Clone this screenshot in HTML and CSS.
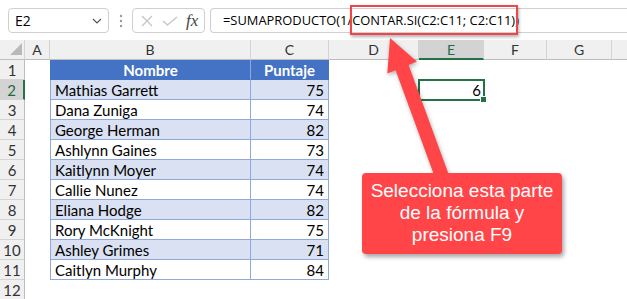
FILE: index.html
```html
<!DOCTYPE html>
<html lang="es">
<head>
    <meta charset="UTF-8">
    <meta name="viewport" content="width=device-width, initial-scale=1.0">
    <title>SUMAPRODUCTO y CONTAR.SI</title>
    <link rel="stylesheet" href="styles.css">
</head>
<body>
    <div class="toolbar">
        <div class="name-box">
            <span>E2</span>
            <svg class="chevron" width="10" height="6" viewBox="0 0 10 6"><path d="M1 1 L5 5 L9 1" fill="none" stroke="#555" stroke-width="1.2"/></svg>
        </div>
        <svg class="grip" width="4" height="14" viewBox="0 0 4 14">
            <circle cx="2" cy="2" r="1.2" fill="#999"/>
            <circle cx="2" cy="7" r="1.2" fill="#999"/>
            <circle cx="2" cy="12" r="1.2" fill="#999"/>
        </svg>
        <div class="fx-box">
            <svg width="12" height="12" viewBox="0 0 12 12"><path d="M1 1 L11 11 M11 1 L1 11" stroke="#c4c4c4" stroke-width="1.3"/></svg>
            <svg width="16" height="10" viewBox="0 0 16 10"><path d="M1 5 L5.5 9 L15 1" fill="none" stroke="#c4c4c4" stroke-width="1.3"/></svg>
            <span class="fx">fx</span>
        </div>
        <div class="formula">
            =SUMAPRODUCTO(1/<span class="mark">CONTAR.SI(C2:C11; C2:C11)</span>)
        </div>
    </div>

    <div class="sheet">
        <div class="ch corner"></div>
        <div class="ch">A</div>
        <div class="ch">B</div>
        <div class="ch">C</div>
        <div class="ch">D</div>
        <div class="ch active">E</div>
        <div class="ch">F</div>
        <div class="ch">G</div>
        <div class="ch last"></div>

        <div class="rh">1</div><div class="c"></div>
        <div class="t head name">Nombre</div><div class="t head score">Puntaje</div>
        <div class="c"></div><div class="c"></div><div class="c"></div><div class="c"></div><div class="c"></div>

        <div class="rh active">2</div><div class="c"></div>
        <div class="t band name">Mathias Garrett</div><div class="t band score">75</div>
        <div class="c"></div><div class="c selected">6</div><div class="c"></div><div class="c"></div><div class="c"></div>

        <div class="rh">3</div><div class="c"></div>
        <div class="t name">Dana Zuniga</div><div class="t score">74</div>
        <div class="c"></div><div class="c"></div><div class="c"></div><div class="c"></div><div class="c"></div>

        <div class="rh">4</div><div class="c"></div>
        <div class="t band name">George Herman</div><div class="t band score">82</div>
        <div class="c"></div><div class="c"></div><div class="c"></div><div class="c"></div><div class="c"></div>

        <div class="rh">5</div><div class="c"></div>
        <div class="t name">Ashlynn Gaines</div><div class="t score">73</div>
        <div class="c"></div><div class="c"></div><div class="c"></div><div class="c"></div><div class="c"></div>

        <div class="rh">6</div><div class="c"></div>
        <div class="t band name">Kaitlynn Moyer</div><div class="t band score">74</div>
        <div class="c"></div><div class="c"></div><div class="c"></div><div class="c"></div><div class="c"></div>

        <div class="rh">7</div><div class="c"></div>
        <div class="t name">Callie Nunez</div><div class="t score">74</div>
        <div class="c"></div><div class="c"></div><div class="c"></div><div class="c"></div><div class="c"></div>

        <div class="rh">8</div><div class="c"></div>
        <div class="t band name">Eliana Hodge</div><div class="t band score">82</div>
        <div class="c"></div><div class="c"></div><div class="c"></div><div class="c"></div><div class="c"></div>

        <div class="rh">9</div><div class="c"></div>
        <div class="t name">Rory McKnight</div><div class="t score">75</div>
        <div class="c"></div><div class="c"></div><div class="c"></div><div class="c"></div><div class="c"></div>

        <div class="rh">10</div><div class="c"></div>
        <div class="t band name">Ashley Grimes</div><div class="t band score">71</div>
        <div class="c"></div><div class="c"></div><div class="c"></div><div class="c"></div><div class="c"></div>

        <div class="rh">11</div><div class="c"></div>
        <div class="t name">Caitlyn Murphy</div><div class="t score">84</div>
        <div class="c"></div><div class="c"></div><div class="c"></div><div class="c"></div><div class="c"></div>

        <div class="rh">12</div><div class="c"></div>
        <div class="c"></div><div class="c"></div>
        <div class="c"></div><div class="c"></div><div class="c"></div><div class="c"></div><div class="c"></div>
    </div>

    <!-- callout arrow pointing at the highlighted part of the formula -->
    <svg class="arrow" width="627" height="299" viewBox="0 0 627 299">
        <polygon points="390,38 416.9,61.6 408.6,65 449.3,176 436.3,181 395.6,70.2 387.3,73.6" fill="#ff4548"/>
    </svg>
    <div class="callout">Selecciona esta parte<br>de la fórmula y<br>presiona F9</div>
</body>
</html>
```

FILE: styles.css
```css
* {
    box-sizing: border-box;
    margin: 0;
    padding: 0;
}

body {
    width: 627px;
    height: 299px;
    overflow: hidden;
    background-color: #fff;
    font-family: Lato, "Open Sans", sans-serif;
    color: #000;
    position: relative;
}

.toolbar {
    height: 40px;
    display: flex;
    align-items: center;
    padding: 1px 0 0 8px;
    background-color: #fff;
}

.name-box {
    width: 101px;
    height: 25px;
    border: 1px solid #cfcfcf;
    border-radius: 4px;
    display: flex;
    align-items: center;
    justify-content: space-between;
    padding: 0 6px 0 6px;
    font-family: "Open Sans", sans-serif;
    font-size: 14px;
}

.grip {
    margin: 0 9px 0 10px;
}

.fx-box {
    width: 73px;
    height: 25px;
    border: 1px solid #cfcfcf;
    border-radius: 4px;
    display: flex;
    align-items: center;
    gap: 9px;
    padding-left: 8px;
}

.fx {
    font-family: "Liberation Serif", serif;
    font-style: italic;
    font-size: 17px;
    color: #444;
    margin-left: -1px;
}

.formula {
    flex: 1;
    height: 25px;
    margin-left: 5px;
    border: 1px solid #cfcfcf;
    border-right: none;
    border-radius: 4px 0 0 4px;
    padding-left: 12px;
    line-height: 23px;
    font-family: "Open Sans", sans-serif;
    font-size: 12.9px;
    white-space: nowrap;
}

.mark {
    position: relative;
}

.mark::after {
    content: "";
    position: absolute;
    left: -2px;
    right: -3px;
    top: -6px;
    bottom: -6px;
    border: 2px solid #f0464a;
    box-shadow: 1px 2px 3px rgba(0, 0, 0, 0.3);
}

.sheet {
    display: grid;
    grid-template-columns: 25px 25px 201px 78px 90px 65px 63px 65px 1fr;
    grid-auto-rows: 20px;
    font-size: 15px;
}

.ch {
    background-color: #f0f0f0;
    border-right: 1px solid #d4d4d4;
    border-bottom: 1px solid #bdbdbd;
    text-align: center;
    line-height: 19px;
    font-size: 14px;
    color: #333;
}

.ch.last {
    border-right: none;
}

.ch.active {
    background-color: #d3d3d3;
    border-bottom: 2px solid #217346;
    color: #1e6b3f;
}

.corner {
    position: relative;
}

.corner::after {
    content: "";
    position: absolute;
    right: 2px;
    bottom: 4px;
    border-left: 12px solid transparent;
    border-bottom: 12px solid #b9b9b9;
}

.rh {
    background-color: #f0f0f0;
    border-right: 1px solid #bdbdbd;
    border-bottom: 1px solid #d4d4d4;
    text-align: center;
    line-height: 20px;
    color: #333;
}

.rh.active {
    background-color: #d3d3d3;
    border-right: 2px solid #217346;
    color: #1e6b3f;
}

.c {
    background-color: #fff;
}

.t {
    border-bottom: 1px solid #8ea9db;
    line-height: 20px;
    padding: 0 4px;
    white-space: nowrap;
}

.t.name {
    border-left: 1px solid #8ea9db;
    border-right: 1px solid #8ea9db;
}

.t.score {
    border-right: 1px solid #8ea9db;
    text-align: right;
}

.t.band {
    background-color: #d9e1f2;
}

.t.head {
    background-color: #4472c4;
    color: #fff;
    font-weight: bold;
    text-align: center;
    border-bottom-color: #4472c4;
    border-left-color: #4472c4;
}

.t.head.name {
    border-right-color: #8ea9db;
}

.t.head.score {
    border-right-color: #4472c4;
}

.selected {
    position: relative;
    text-align: right;
    line-height: 20px;
    padding-right: 3px;
}

.selected::after {
    content: "";
    position: absolute;
    left: -1px;
    top: -1px;
    right: -1px;
    bottom: -1px;
    border: 2px solid #217346;
}

.selected::before {
    content: "";
    position: absolute;
    right: -3px;
    bottom: -3px;
    width: 5px;
    height: 5px;
    background-color: #217346;
    border: 1px solid #fff;
    z-index: 1;
}

.arrow {
    position: absolute;
    left: 0;
    top: 0;
    filter: drop-shadow(1px 2px 2px rgba(0, 0, 0, 0.3));
}

.callout {
    position: absolute;
    left: 362px;
    top: 173px;
    width: 200px;
    height: 81px;
    background-color: #ff4548;
    border-radius: 4px;
    box-shadow: 2px 3px 4px rgba(0, 0, 0, 0.35);
    color: #fff;
    font-family: "Liberation Sans", Arial, sans-serif;
    font-size: 19px;
    line-height: 22px;
    text-align: center;
    padding-top: 7px;
}
```
